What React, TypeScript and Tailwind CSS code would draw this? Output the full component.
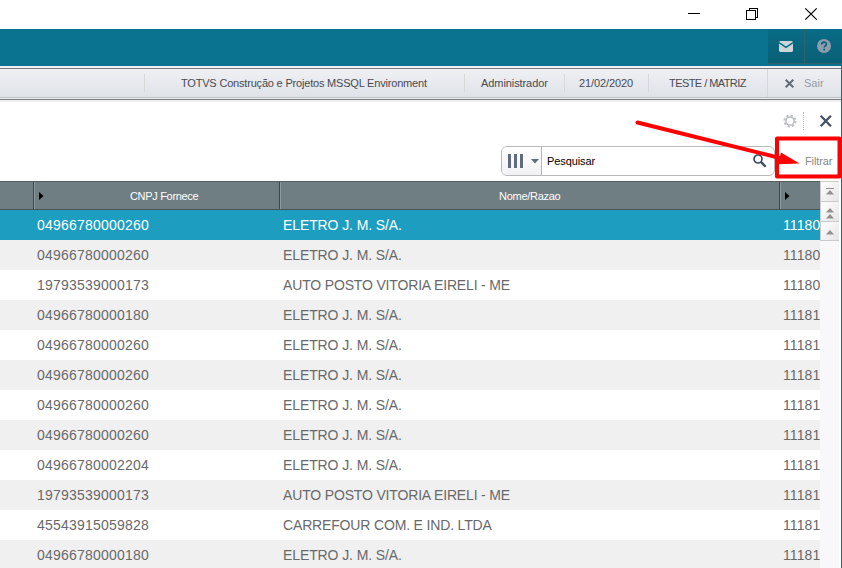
import React from "react";

type Row = { cnpj: string; name: string; code: string };

const ELETRO = "ELETRO J. M. S/A.";
const rows: Row[] = [
  { cnpj: "04966780000260", name: ELETRO, code: "11180" },
  { cnpj: "04966780000260", name: ELETRO, code: "11180" },
  { cnpj: "19793539000173", name: "AUTO POSTO VITORIA EIRELI - ME", code: "11180" },
  { cnpj: "04966780000180", name: ELETRO, code: "11181" },
  { cnpj: "04966780000260", name: ELETRO, code: "11181" },
  { cnpj: "04966780000260", name: ELETRO, code: "11181" },
  { cnpj: "04966780000260", name: ELETRO, code: "11181" },
  { cnpj: "04966780000260", name: ELETRO, code: "11181" },
  { cnpj: "04966780002204", name: ELETRO, code: "11181" },
  { cnpj: "19793539000173", name: "AUTO POSTO VITORIA EIRELI - ME", code: "11181" },
  { cnpj: "45543915059828", name: "CARREFOUR COM. E IND. LTDA", code: "11181" },
  { cnpj: "04966780000180", name: ELETRO, code: "11181" },
];

function TitleBar() {
  return (
    <div className="flex h-[29px] shrink-0 items-start justify-end bg-white">
      <svg width="154" height="29" viewBox="0 0 154 29" fill="none" stroke="#000" shapeRendering="crispEdges">
        <path d="M0 13.5h12" />
        <path d="M58.5 10.5h9v9h-9z" />
        <path d="M61 10V8.500h8.500v8.500H68" />
        <path d="M117.300 8.300l11.400 11.400M128.700 8.300l-11.400 11.400" shapeRendering="auto" strokeWidth="1.200" />
      </svg>
    </div>
  );
}

function Banner() {
  return (
    <div className="flex h-[37px] shrink-0 justify-end bg-[#0a738f]">
      <div className="flex h-[35px] w-[37px] items-center justify-center border-r border-b border-[#33606c] bg-linear-to-b from-[#096c86] to-[#0a6076]">
        <svg width="14" height="11" viewBox="0 0 14 11">
          <path d="M1 0h12l1 1v9l-1 1H1l-1-1V1z" fill="#cbd6dc" />
          <path d="M0 1.700l7 4.600 7-4.600" fill="none" stroke="#096780" strokeWidth="1.400" />
        </svg>
      </div>
      <div className="flex h-[35px] w-[37px] items-center justify-center border-b border-[#33606c] bg-linear-to-b from-[#096c86] to-[#0a6076]">
        <svg width="14" height="14" viewBox="0 0 14 14">
          <circle cx="7" cy="7" r="7" fill="#8c9dab" />
          <path d="M4.700 5.400c0-3 4.700-3 4.700-.3C9.400 6.800 7.200 6.800 7.200 8.600M7.200 9.800v1.800" fill="none" stroke="#096078" strokeWidth="1.700" />
        </svg>
      </div>
    </div>
  );
}

function InfoCell({ className, children }: { className: string; children: React.ReactNode }) {
  return <div className={`flex h-[18px] shrink-0 items-center border-l border-[#d5dad8] whitespace-nowrap ${className}`}>{children}</div>;
}

function InfoBar() {
  return (
    <div className="h-[35px] shrink-0 border-r border-[#0a738f] bg-[#f0f1f3] pt-[2px]">
      <div className="flex h-[30px] items-center border-t border-b border-t-[#77797d] border-b-[#babdc2] bg-linear-to-b from-[#eff0f4] to-[#dfe3e8] pl-[144px] text-[11px] text-[#484a50]">
        <InfoCell className="w-[320px] pl-[36px] tracking-[-0.19px]">TOTVS Construção e Projetos MSSQL Environment</InfoCell>
        <InfoCell className="w-[100px] pl-[16px] tracking-[-0.08px]">Administrador</InfoCell>
        <InfoCell className="w-[84px] pl-[14px] tracking-[-0.1px]">21/02/2020</InfoCell>
        <InfoCell className="w-[119px] pl-[20px] tracking-[-0.56px]">TESTE / MATRIZ</InfoCell>
        <div className="flex h-[28px] w-[73px] items-center border-l border-[#d5dad8] pl-[17px] text-[#969ba4]">
          <svg width="9" height="9" viewBox="0 0 9 9" stroke="#636b79" strokeWidth="2">
            <path d="M.7.7l7.600 7.600M8.300.7L.7 8.300" />
          </svg>
          <span className="ml-[10px]">Sair</span>
        </div>
      </div>
      <div className="mt-[1px] h-px bg-[#77797d]" />
    </div>
  );
}

function Toolbar() {
  return (
    <div className="h-[80px] shrink-0 border-t border-[#eee]">
      <div className="flex h-[38px] items-center justify-end pr-[9px]">
        <svg width="14" height="14" viewBox="0 0 14 14" fill="none" stroke="#bbbec3">
          <circle cx="7" cy="7" r="4.100" strokeWidth="1.500" />
          <circle cx="7" cy="7" r="5.500" strokeWidth="2" strokeDasharray="2.160 2.160" />
        </svg>
        <div className="ml-[6px] h-[18px] border-l border-dotted border-[#b9b9b9]" />
        <svg className="ml-[15px]" width="13" height="12" viewBox="0 0 13 12" stroke="#455165" strokeWidth="2.300">
          <path d="M1.700.8l10.200 10.400M11.900.8L1.700 11.200" />
        </svg>
      </div>
      <div className="flex h-[41px] items-start justify-end pt-[6px]">
        <div className="flex h-[30px] w-[274px] rounded-[6px] border border-[#b7b9bb] bg-white">
          <div className="flex w-[40px] items-center rounded-l-[5px] border-r border-[#b3b5b8] bg-linear-to-b from-white to-[#f1f1f3] pl-[6px]">
            <svg width="33" height="14" viewBox="0 0 33 14" fill="#606b7d">
              <path d="M0 0h3v14H0zM6 0h3v14H6zM12 0h3v14h-3zM23 5h8l-4 4.500z" />
            </svg>
          </div>
          <div className="flex flex-1 items-center pl-[5px] text-[11px] tracking-[-0.1px] text-black">Pesquisar</div>
          <svg className="mt-[7px] mr-[6px]" width="15" height="15" viewBox="0 0 15 15" fill="none" stroke="#3e4a61">
            <circle cx="5" cy="5" r="4" strokeWidth="1.700" />
            <path d="M8 8l4.700 4.700" strokeWidth="2.300" />
          </svg>
        </div>
        <div className="flex h-[30px] w-[66px] items-center pl-[30px] text-[11px] tracking-[-0.1px] text-[#888a8d]">Filtrar</div>
      </div>
    </div>
  );
}

function HeaderArrow() {
  return (
    <svg width="5" height="8" viewBox="0 0 5 8">
      <path d="M0 0l4.500 4L0 8z" fill="#000" />
    </svg>
  );
}

function Grid() {
  return (
    <div className="w-[820px] shrink-0">
      <div className="flex h-[29px] border-t border-b border-t-[#53605f] border-b-[#475354] bg-[#6f7e82] text-[11px] text-white">
        <div className="w-[34px] border-r border-[#3d4748]" />
        <div className="flex w-[246px] items-center border-r border-l border-r-[#3d4748] border-l-[#8e9a9d] pl-[4px]">
          <HeaderArrow />
          <span className="ml-[86px] pt-[2px] tracking-[-0.32px]">CNPJ Fornece</span>
        </div>
        <div className="flex w-[500px] items-center border-r border-l border-r-[#3d4748] border-l-[#8e9a9d] pt-[2px] pl-[218px] tracking-[-0.28px]">
          Nome/Razao
        </div>
        <div className="flex w-[40px] items-center border-l border-[#8e9a9d] pl-[4px]">
          <HeaderArrow />
        </div>
      </div>
      {rows.map((row, i) => (
        <div
          key={i}
          className={`flex h-[30px] items-center overflow-hidden pl-[37px] text-[14px] whitespace-nowrap ${
            i === 0 ? "bg-[#1d9dbf] text-white" : i % 2 ? "bg-[#f0f0f0] text-[#68696b]" : "bg-white text-[#68696b]"
          }`}
        >
          <span className="w-[246px] shrink-0 tracking-[0.21px]">{row.cnpj}</span>
          <span className={`w-[500px] shrink-0 ${row.name === ELETRO ? "tracking-[-0.1px]" : "tracking-[-0.16px]"}`}>{row.name}</span>
          <span className="shrink-0 tracking-[0.1px]">{row.code}</span>
        </div>
      ))}
    </div>
  );
}

function ScrollRail() {
  const icons = ["M4 6h8v1H4zM4 12.500h8L8 8z", "M4 10.500h8L8 6zM4 16.500h8L8 12z", "M4 12.500h8L8 8z"];
  return (
    <div className="w-[19px] bg-[#f8f8fb]">
      {icons.map((d, i) => (
        <div key={i} className={`border-b border-l border-[#cbcbcb] bg-linear-to-br from-white to-[#e5e5e7] ${i === 0 ? "h-[21px] border-t" : i === 1 ? "h-[20px]" : "h-[19px]"}`}>
          <svg width="18" height="18" viewBox="-1 0 18 18" fill="#909090">
            <path d={d} />
          </svg>
        </div>
      ))}
    </div>
  );
}

export default function App() {
  return (
    <div className="relative flex h-[568px] w-[842px] flex-col overflow-hidden bg-white font-['Liberation_Sans',Arial,sans-serif]">
      <TitleBar />
      <Banner />
      <InfoBar />
      <div className="flex min-h-0 flex-1 flex-col border-r border-[#0a738f]">
        <Toolbar />
        <div className="flex min-h-0 flex-1 overflow-hidden">
          <Grid />
          <ScrollRail />
        </div>
      </div>
      <svg className="absolute top-[110px] left-[630px]" width="212" height="75" viewBox="630 110 212 75">
        <rect x="777" y="138.500" width="62.500" height="38" fill="none" stroke="#f00" strokeWidth="4" strokeLinejoin="round" />
        <path d="M637.500 122.500L784 159" stroke="#f00" strokeWidth="4" strokeLinecap="round" />
        <path d="M781 152.500l18.500 11-21.500.7z" fill="#f00" />
      </svg>
    </div>
  );
}
